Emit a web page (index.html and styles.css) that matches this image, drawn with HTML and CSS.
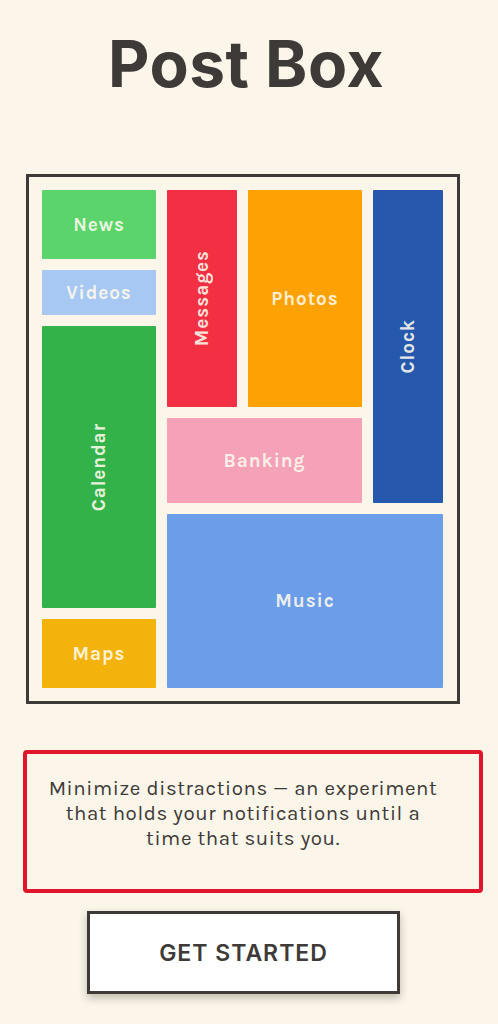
FILE: index.html
```html
<!DOCTYPE html>
<html>
<head>
<meta charset="utf-8">
<link rel="stylesheet" href="styles.css">
</head>
<body>
<main class="page">
  <h1 class="title">Post Box</h1>
  <div class="frame">
    <div class="grid">
      <div class="tile news">News</div>
      <div class="tile videos">Videos</div>
      <div class="tile calendar"><span class="vert">Calendar</span></div>
      <div class="tile maps">Maps</div>
      <div class="tile messages"><span class="vert">Messages</span></div>
      <div class="tile photos">Photos</div>
      <div class="tile clock"><span class="vert">Clock</span></div>
      <div class="tile banking">Banking</div>
      <div class="tile music">Music</div>
    </div>
  </div>
  <div class="note">
    <p>Minimize distractions — an experiment that holds your notifications until a time that suits you.</p>
  </div>
  <button class="cta">GET STARTED</button>
</main>
</body>
</html>
```
FILE: styles.css
```css
html, body {
  margin: 0;
  padding: 0;
  background: #fbf5ea;
}
.page {
  width: 498px;
  height: 1024px;
  display: flex;
  flex-direction: column;
  align-items: flex-start;
  font-family: "Karla", "Lato", "Noto Sans", sans-serif;
  color: #3d3a37;
}
.title {
  align-self: center;
  margin: 24px 0 0 -6px;
  font-family: "Inter", sans-serif;
  font-weight: 700;
  font-size: 64px;
  line-height: 80px;
  letter-spacing: 0.5px;
  color: #3d3a37;
}
.frame {
  margin: 70px 0 0 26px;
  width: 415px;
  height: 511px;
  border: 3px solid #3d3a37;
  padding: 13px 0 0 13px;
  box-sizing: content-box;
}
.grid {
  display: grid;
  grid-template-columns: 114px 70px 114px 70px;
  grid-template-rows: 69px 45px 81px 85px 94px 69px;
  gap: 11px;
}
.tile {
  display: flex;
  align-items: center;
  justify-content: center;
  color: rgba(255, 250, 238, 0.9);
  font-weight: 700;
  font-size: 19px;
  letter-spacing: 0.9px;
  border-radius: 1px;
}
.vert {
  writing-mode: vertical-rl;
  transform: rotate(180deg);
}
.news { grid-column: 1; grid-row: 1; background: #5bd56b; }
.videos { grid-column: 1; grid-row: 2; background: #a7c8f3; }
.calendar { grid-column: 1; grid-row: 3 / 6; background: #33b24a; }
.maps { grid-column: 1; grid-row: 6; background: #f3b30b; }
.messages { grid-column: 2; grid-row: 1 / 4; background: #f32f43; }
.photos { grid-column: 3; grid-row: 1 / 4; background: #fea203; }
.clock { grid-column: 4; grid-row: 1 / 5; background: #2659ad; }
.banking { grid-column: 2 / 4; grid-row: 4; background: #f5a1b8; }
.music { grid-column: 2 / 5; grid-row: 5 / 7; background: #6c9de8; }
.note {
  margin: 46px 0 0 23px;
  width: 460px;
  height: 143px;
  box-sizing: border-box;
  border: 4px solid #e0172c;
  border-radius: 4px;
  padding: 22px 40px 0 20px;
}
.note p {
  margin: 0;
  text-align: center;
  font-size: 20.5px;
  line-height: 25px;
  letter-spacing: 0.6px;
  color: #3d3a37;
}
.cta {
  margin: 18px 0 0 87px;
  width: 313px;
  height: 83px;
  box-sizing: border-box;
  background: #ffffff;
  border: 3px solid #3d3a37;
  box-shadow: 0 4px 8px rgba(60, 50, 30, 0.3);
  font-family: "Inter", sans-serif;
  font-weight: 600;
  font-size: 23px;
  letter-spacing: 1px;
  color: #3d3a37;
  padding: 0;
}
```
